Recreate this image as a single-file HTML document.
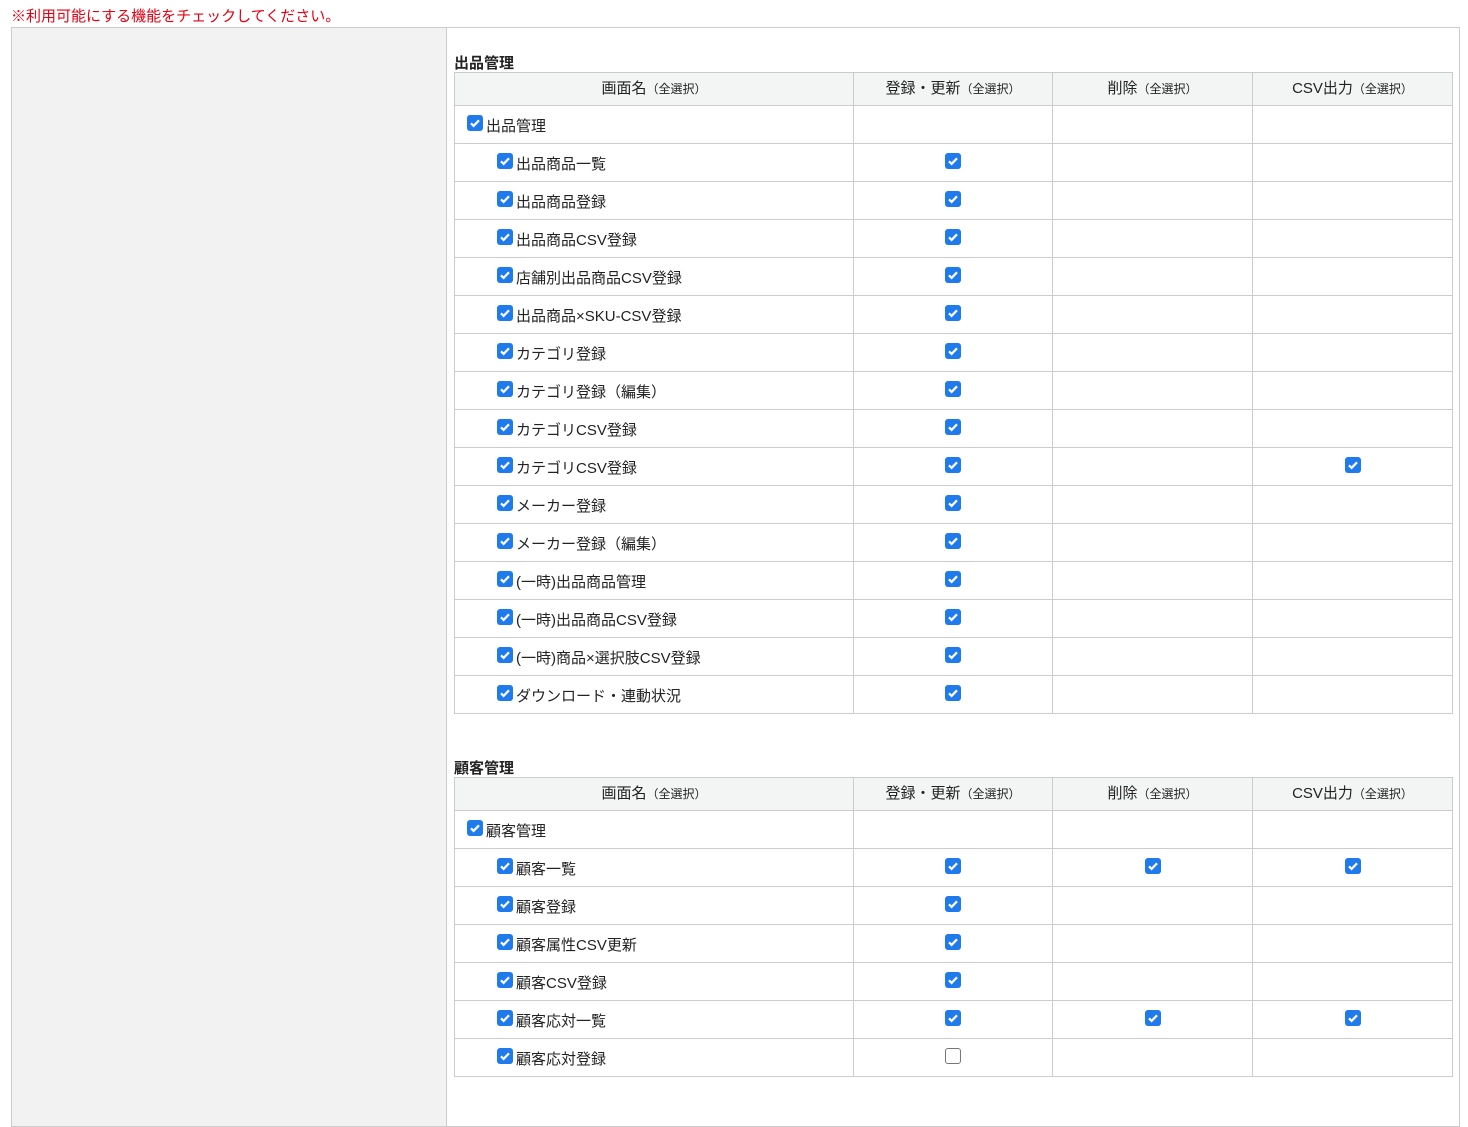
<!DOCTYPE html>
<html><head><meta charset="utf-8"><style>
*{margin:0;padding:0;box-sizing:border-box}
body{width:1468px;height:1071px;overflow:hidden;background:#fff;font-family:"Liberation Sans","Noto Sans CJK JP",sans-serif;font-size:15px;color:#222;position:relative}
.note{position:absolute;left:11px;top:5px;color:#e60012;font-size:15px}
.outer{position:absolute;left:11px;top:27px;width:1449px;height:1100px;border:1px solid #ccc}
.left{position:absolute;left:0;top:0;width:435px;height:100%;background:#f2f2f2;border-right:1px solid #ccc}
.ttl{position:absolute;left:454px;font-weight:bold;font-size:15px}
table{position:absolute;left:454px;border-collapse:collapse;table-layout:fixed;width:998px}
td,th{border:1px solid #ccc;height:38px;font-weight:normal}
td{padding-top:2px}
th{background:#f3f4f4;height:33px;text-align:center;font-size:15px;padding-bottom:4px}
th small{font-size:12px}
td.c{text-align:center}
.cb{display:inline-block;width:16px;height:16px;border-radius:3px;background:#1f7bec;vertical-align:-2px;position:relative}
.cb svg{position:absolute;left:0;top:0}
.ub{display:inline-block;width:16px;height:16px;border-radius:3px;border:1px solid #767676;background:#fff;vertical-align:-2px}
td.n1{padding-left:12px}
td.n2{padding-left:42px}
td.n1 .cb,td.n2 .cb{margin-right:3px;top:-2px}
td.c .cb,td.c .ub{position:relative;top:-2px}
</style></head><body>
<div class="note">※利用可能にする機能をチェックしてください。</div>
<div class="outer"><div class="left"></div></div>
<div class="ttl" style="top:52px">出品管理</div>
<table style="top:72px">
<colgroup><col style="width:399px"><col style="width:199px"><col style="width:200px"><col style="width:200px"></colgroup>
<tr><th>画面名<small>（全選択）</small></th><th>登録・更新<small>（全選択）</small></th><th>削除<small>（全選択）</small></th><th>CSV出力<small>（全選択）</small></th></tr>
<tr><td class="n1"><span class="cb"><svg width="16" height="16"><path d="M4 8.3l2.6 2.6L12 5.3" stroke="#fff" stroke-width="2.2" fill="none"/></svg></span>出品管理</td><td></td><td></td><td></td></tr>
<tr><td class="n2"><span class="cb"><svg width="16" height="16"><path d="M4 8.3l2.6 2.6L12 5.3" stroke="#fff" stroke-width="2.2" fill="none"/></svg></span>出品商品一覧</td><td class="c"><span class="cb"><svg width="16" height="16"><path d="M4 8.3l2.6 2.6L12 5.3" stroke="#fff" stroke-width="2.2" fill="none"/></svg></span></td><td></td><td></td></tr>
<tr><td class="n2"><span class="cb"><svg width="16" height="16"><path d="M4 8.3l2.6 2.6L12 5.3" stroke="#fff" stroke-width="2.2" fill="none"/></svg></span>出品商品登録</td><td class="c"><span class="cb"><svg width="16" height="16"><path d="M4 8.3l2.6 2.6L12 5.3" stroke="#fff" stroke-width="2.2" fill="none"/></svg></span></td><td></td><td></td></tr>
<tr><td class="n2"><span class="cb"><svg width="16" height="16"><path d="M4 8.3l2.6 2.6L12 5.3" stroke="#fff" stroke-width="2.2" fill="none"/></svg></span>出品商品CSV登録</td><td class="c"><span class="cb"><svg width="16" height="16"><path d="M4 8.3l2.6 2.6L12 5.3" stroke="#fff" stroke-width="2.2" fill="none"/></svg></span></td><td></td><td></td></tr>
<tr><td class="n2"><span class="cb"><svg width="16" height="16"><path d="M4 8.3l2.6 2.6L12 5.3" stroke="#fff" stroke-width="2.2" fill="none"/></svg></span>店舗別出品商品CSV登録</td><td class="c"><span class="cb"><svg width="16" height="16"><path d="M4 8.3l2.6 2.6L12 5.3" stroke="#fff" stroke-width="2.2" fill="none"/></svg></span></td><td></td><td></td></tr>
<tr><td class="n2"><span class="cb"><svg width="16" height="16"><path d="M4 8.3l2.6 2.6L12 5.3" stroke="#fff" stroke-width="2.2" fill="none"/></svg></span>出品商品×SKU-CSV登録</td><td class="c"><span class="cb"><svg width="16" height="16"><path d="M4 8.3l2.6 2.6L12 5.3" stroke="#fff" stroke-width="2.2" fill="none"/></svg></span></td><td></td><td></td></tr>
<tr><td class="n2"><span class="cb"><svg width="16" height="16"><path d="M4 8.3l2.6 2.6L12 5.3" stroke="#fff" stroke-width="2.2" fill="none"/></svg></span>カテゴリ登録</td><td class="c"><span class="cb"><svg width="16" height="16"><path d="M4 8.3l2.6 2.6L12 5.3" stroke="#fff" stroke-width="2.2" fill="none"/></svg></span></td><td></td><td></td></tr>
<tr><td class="n2"><span class="cb"><svg width="16" height="16"><path d="M4 8.3l2.6 2.6L12 5.3" stroke="#fff" stroke-width="2.2" fill="none"/></svg></span>カテゴリ登録（編集）</td><td class="c"><span class="cb"><svg width="16" height="16"><path d="M4 8.3l2.6 2.6L12 5.3" stroke="#fff" stroke-width="2.2" fill="none"/></svg></span></td><td></td><td></td></tr>
<tr><td class="n2"><span class="cb"><svg width="16" height="16"><path d="M4 8.3l2.6 2.6L12 5.3" stroke="#fff" stroke-width="2.2" fill="none"/></svg></span>カテゴリCSV登録</td><td class="c"><span class="cb"><svg width="16" height="16"><path d="M4 8.3l2.6 2.6L12 5.3" stroke="#fff" stroke-width="2.2" fill="none"/></svg></span></td><td></td><td></td></tr>
<tr><td class="n2"><span class="cb"><svg width="16" height="16"><path d="M4 8.3l2.6 2.6L12 5.3" stroke="#fff" stroke-width="2.2" fill="none"/></svg></span>カテゴリCSV登録</td><td class="c"><span class="cb"><svg width="16" height="16"><path d="M4 8.3l2.6 2.6L12 5.3" stroke="#fff" stroke-width="2.2" fill="none"/></svg></span></td><td></td><td class="c"><span class="cb"><svg width="16" height="16"><path d="M4 8.3l2.6 2.6L12 5.3" stroke="#fff" stroke-width="2.2" fill="none"/></svg></span></td></tr>
<tr><td class="n2"><span class="cb"><svg width="16" height="16"><path d="M4 8.3l2.6 2.6L12 5.3" stroke="#fff" stroke-width="2.2" fill="none"/></svg></span>メーカー登録</td><td class="c"><span class="cb"><svg width="16" height="16"><path d="M4 8.3l2.6 2.6L12 5.3" stroke="#fff" stroke-width="2.2" fill="none"/></svg></span></td><td></td><td></td></tr>
<tr><td class="n2"><span class="cb"><svg width="16" height="16"><path d="M4 8.3l2.6 2.6L12 5.3" stroke="#fff" stroke-width="2.2" fill="none"/></svg></span>メーカー登録（編集）</td><td class="c"><span class="cb"><svg width="16" height="16"><path d="M4 8.3l2.6 2.6L12 5.3" stroke="#fff" stroke-width="2.2" fill="none"/></svg></span></td><td></td><td></td></tr>
<tr><td class="n2"><span class="cb"><svg width="16" height="16"><path d="M4 8.3l2.6 2.6L12 5.3" stroke="#fff" stroke-width="2.2" fill="none"/></svg></span>(一時)出品商品管理</td><td class="c"><span class="cb"><svg width="16" height="16"><path d="M4 8.3l2.6 2.6L12 5.3" stroke="#fff" stroke-width="2.2" fill="none"/></svg></span></td><td></td><td></td></tr>
<tr><td class="n2"><span class="cb"><svg width="16" height="16"><path d="M4 8.3l2.6 2.6L12 5.3" stroke="#fff" stroke-width="2.2" fill="none"/></svg></span>(一時)出品商品CSV登録</td><td class="c"><span class="cb"><svg width="16" height="16"><path d="M4 8.3l2.6 2.6L12 5.3" stroke="#fff" stroke-width="2.2" fill="none"/></svg></span></td><td></td><td></td></tr>
<tr><td class="n2"><span class="cb"><svg width="16" height="16"><path d="M4 8.3l2.6 2.6L12 5.3" stroke="#fff" stroke-width="2.2" fill="none"/></svg></span>(一時)商品×選択肢CSV登録</td><td class="c"><span class="cb"><svg width="16" height="16"><path d="M4 8.3l2.6 2.6L12 5.3" stroke="#fff" stroke-width="2.2" fill="none"/></svg></span></td><td></td><td></td></tr>
<tr><td class="n2"><span class="cb"><svg width="16" height="16"><path d="M4 8.3l2.6 2.6L12 5.3" stroke="#fff" stroke-width="2.2" fill="none"/></svg></span>ダウンロード・連動状況</td><td class="c"><span class="cb"><svg width="16" height="16"><path d="M4 8.3l2.6 2.6L12 5.3" stroke="#fff" stroke-width="2.2" fill="none"/></svg></span></td><td></td><td></td></tr>
</table>
<div class="ttl" style="top:757px">顧客管理</div>
<table style="top:777px">
<colgroup><col style="width:399px"><col style="width:199px"><col style="width:200px"><col style="width:200px"></colgroup>
<tr><th>画面名<small>（全選択）</small></th><th>登録・更新<small>（全選択）</small></th><th>削除<small>（全選択）</small></th><th>CSV出力<small>（全選択）</small></th></tr>
<tr><td class="n1"><span class="cb"><svg width="16" height="16"><path d="M4 8.3l2.6 2.6L12 5.3" stroke="#fff" stroke-width="2.2" fill="none"/></svg></span>顧客管理</td><td></td><td></td><td></td></tr>
<tr><td class="n2"><span class="cb"><svg width="16" height="16"><path d="M4 8.3l2.6 2.6L12 5.3" stroke="#fff" stroke-width="2.2" fill="none"/></svg></span>顧客一覧</td><td class="c"><span class="cb"><svg width="16" height="16"><path d="M4 8.3l2.6 2.6L12 5.3" stroke="#fff" stroke-width="2.2" fill="none"/></svg></span></td><td class="c"><span class="cb"><svg width="16" height="16"><path d="M4 8.3l2.6 2.6L12 5.3" stroke="#fff" stroke-width="2.2" fill="none"/></svg></span></td><td class="c"><span class="cb"><svg width="16" height="16"><path d="M4 8.3l2.6 2.6L12 5.3" stroke="#fff" stroke-width="2.2" fill="none"/></svg></span></td></tr>
<tr><td class="n2"><span class="cb"><svg width="16" height="16"><path d="M4 8.3l2.6 2.6L12 5.3" stroke="#fff" stroke-width="2.2" fill="none"/></svg></span>顧客登録</td><td class="c"><span class="cb"><svg width="16" height="16"><path d="M4 8.3l2.6 2.6L12 5.3" stroke="#fff" stroke-width="2.2" fill="none"/></svg></span></td><td></td><td></td></tr>
<tr><td class="n2"><span class="cb"><svg width="16" height="16"><path d="M4 8.3l2.6 2.6L12 5.3" stroke="#fff" stroke-width="2.2" fill="none"/></svg></span>顧客属性CSV更新</td><td class="c"><span class="cb"><svg width="16" height="16"><path d="M4 8.3l2.6 2.6L12 5.3" stroke="#fff" stroke-width="2.2" fill="none"/></svg></span></td><td></td><td></td></tr>
<tr><td class="n2"><span class="cb"><svg width="16" height="16"><path d="M4 8.3l2.6 2.6L12 5.3" stroke="#fff" stroke-width="2.2" fill="none"/></svg></span>顧客CSV登録</td><td class="c"><span class="cb"><svg width="16" height="16"><path d="M4 8.3l2.6 2.6L12 5.3" stroke="#fff" stroke-width="2.2" fill="none"/></svg></span></td><td></td><td></td></tr>
<tr><td class="n2"><span class="cb"><svg width="16" height="16"><path d="M4 8.3l2.6 2.6L12 5.3" stroke="#fff" stroke-width="2.2" fill="none"/></svg></span>顧客応対一覧</td><td class="c"><span class="cb"><svg width="16" height="16"><path d="M4 8.3l2.6 2.6L12 5.3" stroke="#fff" stroke-width="2.2" fill="none"/></svg></span></td><td class="c"><span class="cb"><svg width="16" height="16"><path d="M4 8.3l2.6 2.6L12 5.3" stroke="#fff" stroke-width="2.2" fill="none"/></svg></span></td><td class="c"><span class="cb"><svg width="16" height="16"><path d="M4 8.3l2.6 2.6L12 5.3" stroke="#fff" stroke-width="2.2" fill="none"/></svg></span></td></tr>
<tr><td class="n2"><span class="cb"><svg width="16" height="16"><path d="M4 8.3l2.6 2.6L12 5.3" stroke="#fff" stroke-width="2.2" fill="none"/></svg></span>顧客応対登録</td><td class="c"><span class="ub"></span></td><td></td><td></td></tr>
</table>
</body></html>
